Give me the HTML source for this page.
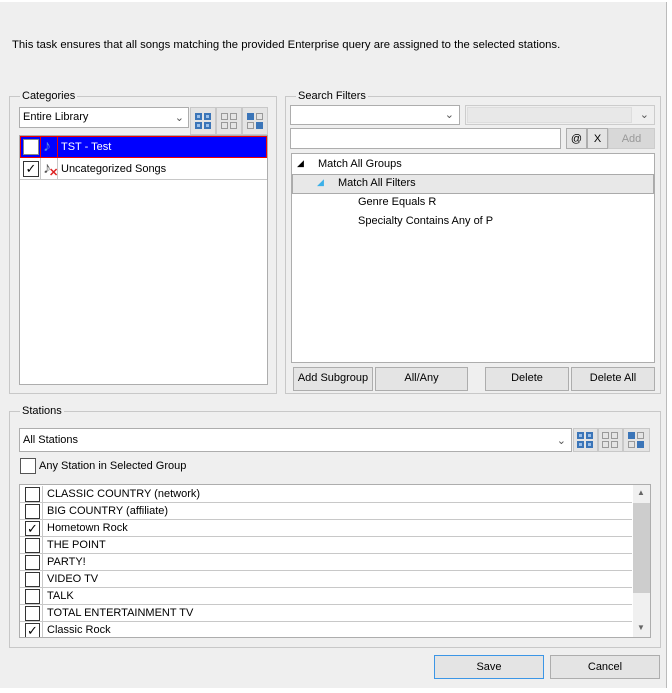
<!DOCTYPE html>
<html><head><style>
*{box-sizing:border-box}
body{margin:0;width:672px;height:693px;background:#fff;font-family:"Liberation Sans",sans-serif;font-size:11px;color:#000;position:relative;overflow:hidden}
.a{position:absolute}
.dlg{left:0;top:2px;width:667px;height:686px;background:#efefef;border-right:1px solid #bbb}
.grp{border:1px solid #c8c8c8}
.lg{background:#efefef;padding:0 2px;line-height:12px}
.box{background:#fff;border:1px solid #adadad}
.btn{background:#e4e4e4;border:1px solid #adadad;text-align:center;line-height:20px}
.cb{width:16px;height:16px;border:1px solid #333;background:#fff}
.ic{border:1px solid #c8c8c8;background:#e4e4e4}
.row{left:0;right:0;height:17px;border-bottom:1px solid #c8c8c8;line-height:16px}
.row .c{position:absolute;left:2px;top:0;width:21px;height:17px;border-right:1px solid #c8c8c8}
.row .c i{position:absolute;left:3px;top:1px;width:15px;height:15px;border:1px solid #333;background:#fff}
.row span{position:absolute;left:27px}
.chk{font-style:normal;font-size:13px;line-height:13px;text-align:center}
</style></head><body>
<div class="a dlg"></div>
<div class="a" style="left:12px;top:39px;font-size:11.3px;white-space:nowrap">This task ensures that all songs matching the provided Enterprise query are assigned to the selected stations.</div>

<!-- Categories -->
<div class="a grp" style="left:9px;top:96px;width:268px;height:298px"></div>
<div class="a lg" style="left:20px;top:90px">Categories</div>
<div class="a box" style="left:19px;top:107px;width:170px;height:21px;padding:3px 0 0 3px">Entire Library<span style="position:absolute;right:4px;top:3px;color:#555">&#8964;</span></div>
<div class="a ic" style="left:190px;top:107px;width:26px;height:28px"><svg width="24" height="26"><g fill="#3b75b8"><rect x="4" y="5" width="7" height="7"/><rect x="13" y="5" width="7" height="7"/><rect x="4" y="14" width="7" height="7"/><rect x="13" y="14" width="7" height="7"/></g><g fill="#9cc0ea"><rect x="6" y="7" width="3" height="3"/><rect x="15" y="7" width="3" height="3"/><rect x="6" y="16" width="3" height="3"/><rect x="15" y="16" width="3" height="3"/></g></svg></div>
<div class="a ic" style="left:216px;top:107px;width:26px;height:28px"><svg width="24" height="26"><g fill="none" stroke="#999"><rect x="4.5" y="5.5" width="6" height="6"/><rect x="13.5" y="5.5" width="6" height="6"/><rect x="4.5" y="14.5" width="6" height="6"/><rect x="13.5" y="14.5" width="6" height="6"/></g></svg></div>
<div class="a ic" style="left:242px;top:107px;width:26px;height:28px"><svg width="24" height="26"><g fill="#3b75b8"><rect x="4" y="5" width="7" height="7"/><rect x="13" y="14" width="7" height="7"/></g><g fill="none" stroke="#999"><rect x="13.5" y="5.5" width="6" height="6"/><rect x="4.5" y="14.5" width="6" height="6"/></g></svg></div>
<div class="a box" style="left:19px;top:135px;width:249px;height:250px">
 <div class="a" style="left:0;top:0;width:247px;height:22px;background:#0000ff;border:1px solid #e00"></div>
 <div class="a cb" style="left:3px;top:3px;border-color:#888"></div>
 <div class="a" style="left:20px;top:0;width:1px;height:22px;background:#e00"></div>
 <div class="a" style="left:37px;top:0;width:1px;height:22px;background:#e00"></div>
 <div class="a" style="left:23px;top:2px;color:#5b8fd6;font-size:16px">&#9834;</div>
 <div class="a" style="left:41px;top:5px;color:#fff">TST - Test</div>
 <div class="a" style="left:0;top:22px;width:247px;height:22px;border-bottom:1px solid #c8c8c8"></div>
 <div class="a" style="left:20px;top:22px;width:1px;height:22px;background:#c8c8c8"></div>
 <div class="a" style="left:37px;top:22px;width:1px;height:22px;background:#c8c8c8"></div>
 <div class="a cb chk" style="left:3px;top:25px">&#10003;</div>
 <div class="a" style="left:23px;top:24px;color:#555;font-size:16px">&#9834;</div>
 <div class="a" style="left:29px;top:30px;color:#d22;font-size:11px;font-weight:bold">&#10005;</div>
 <div class="a" style="left:41px;top:27px">Uncategorized Songs</div>
</div>

<!-- Search Filters -->
<div class="a grp" style="left:285px;top:96px;width:376px;height:298px"></div>
<div class="a lg" style="left:296px;top:90px">Search Filters</div>
<div class="a box" style="left:290px;top:105px;width:170px;height:20px"><span style="position:absolute;right:5px;top:2px;color:#555">&#8964;</span></div>
<div class="a" style="left:465px;top:105px;width:190px;height:20px;background:#efefef;border:1px solid #ccc"><div class="a" style="left:1px;top:1px;width:165px;height:16px;background:#e8e8e8;border:1px solid #ddd"></div><span style="position:absolute;right:5px;top:2px;color:#555">&#8964;</span></div>
<div class="a box" style="left:290px;top:128px;width:271px;height:21px"></div>
<div class="a btn" style="left:566px;top:128px;width:21px;height:21px">@</div>
<div class="a btn" style="left:587px;top:128px;width:21px;height:21px">X</div>
<div class="a btn" style="left:608px;top:128px;width:47px;height:21px;background:#d8d8d8;border-color:#ccc;color:#999">Add</div>
<div class="a box" style="left:291px;top:153px;width:364px;height:210px">
 <div class="a" style="left:5px;top:4px;font-size:9px">&#9698;</div>
 <div class="a" style="left:26px;top:4px">Match All Groups</div>
 <div class="a" style="left:0;top:20px;width:362px;height:20px;background:#e8e8e8;border:1px solid #aaa"></div>
 <div class="a" style="left:25px;top:23px;font-size:9px;color:#3bb0e8">&#9698;</div>
 <div class="a" style="left:46px;top:23px">Match All Filters</div>
 <div class="a" style="left:66px;top:42px">Genre Equals R</div>
 <div class="a" style="left:66px;top:61px">Specialty Contains Any of P</div>
</div>
<div class="a btn" style="left:293px;top:367px;width:80px;height:24px">Add Subgroup</div>
<div class="a btn" style="left:375px;top:367px;width:93px;height:24px">All/Any</div>
<div class="a btn" style="left:485px;top:367px;width:84px;height:24px">Delete</div>
<div class="a btn" style="left:571px;top:367px;width:84px;height:24px">Delete All</div>

<!-- Stations -->
<div class="a grp" style="left:9px;top:411px;width:652px;height:237px"></div>
<div class="a lg" style="left:20px;top:405px">Stations</div>
<div class="a box" style="left:19px;top:428px;width:553px;height:24px;padding:5px 0 0 3px">All Stations<span style="position:absolute;right:5px;top:5px;color:#555">&#8964;</span></div>
<div class="a ic" style="left:573px;top:428px;width:25px;height:24px"><svg width="23" height="22"><g fill="#3b75b8"><rect x="3" y="3" width="7" height="7"/><rect x="12" y="3" width="7" height="7"/><rect x="3" y="12" width="7" height="7"/><rect x="12" y="12" width="7" height="7"/></g><g fill="#9cc0ea"><rect x="5" y="5" width="3" height="3"/><rect x="14" y="5" width="3" height="3"/><rect x="5" y="14" width="3" height="3"/><rect x="14" y="14" width="3" height="3"/></g></svg></div>
<div class="a ic" style="left:598px;top:428px;width:25px;height:24px"><svg width="23" height="22"><g fill="none" stroke="#999"><rect x="3.5" y="3.5" width="6" height="6"/><rect x="12.5" y="3.5" width="6" height="6"/><rect x="3.5" y="12.5" width="6" height="6"/><rect x="12.5" y="12.5" width="6" height="6"/></g></svg></div>
<div class="a ic" style="left:623px;top:428px;width:27px;height:24px"><svg width="25" height="22"><g fill="#3b75b8"><rect x="4" y="3" width="7" height="7"/><rect x="13" y="12" width="7" height="7"/></g><g fill="none" stroke="#999"><rect x="13.5" y="3.5" width="6" height="6"/><rect x="4.5" y="12.5" width="6" height="6"/></g></svg></div>
<div class="a cb" style="left:20px;top:458px;width:16px;height:16px;border-color:#555"></div>
<div class="a" style="left:39px;top:460px">Any Station in Selected Group</div>
<div class="a box" style="left:19px;top:484px;width:632px;height:154px;overflow:hidden">
 <div class="a" style="left:0;top:1px;width:612px;height:152px">
  <div class="a row" style="top:0"><div class="c"><i></i></div><span>CLASSIC COUNTRY (network)</span></div>
  <div class="a row" style="top:17px"><div class="c"><i></i></div><span>BIG COUNTRY (affiliate)</span></div>
  <div class="a row" style="top:34px"><div class="c"><i class="chk">&#10003;</i></div><span>Hometown Rock</span></div>
  <div class="a row" style="top:51px"><div class="c"><i></i></div><span>THE POINT</span></div>
  <div class="a row" style="top:68px"><div class="c"><i></i></div><span>PARTY!</span></div>
  <div class="a row" style="top:85px"><div class="c"><i></i></div><span>VIDEO TV</span></div>
  <div class="a row" style="top:102px"><div class="c"><i></i></div><span>TALK</span></div>
  <div class="a row" style="top:119px"><div class="c"><i></i></div><span>TOTAL ENTERTAINMENT TV</span></div>
  <div class="a row" style="top:136px;border:none"><div class="c"><i class="chk">&#10003;</i></div><span>Classic Rock</span></div>
 </div>
 <div class="a" style="left:613px;top:0;width:17px;height:152px;background:#f0f0f0">
  <div class="a" style="left:0;top:18px;width:17px;height:90px;background:#cdcdcd"></div>
  <div class="a" style="left:4px;top:3px;font-size:8px;color:#666">&#9650;</div>
  <div class="a" style="left:4px;top:138px;font-size:8px;color:#666">&#9660;</div>
 </div>
</div>

<div class="a btn" style="left:434px;top:655px;width:110px;height:24px;border-color:#3c96e6;line-height:22px">Save</div>
<div class="a btn" style="left:550px;top:655px;width:110px;height:24px;line-height:22px">Cancel</div>
</body></html>
